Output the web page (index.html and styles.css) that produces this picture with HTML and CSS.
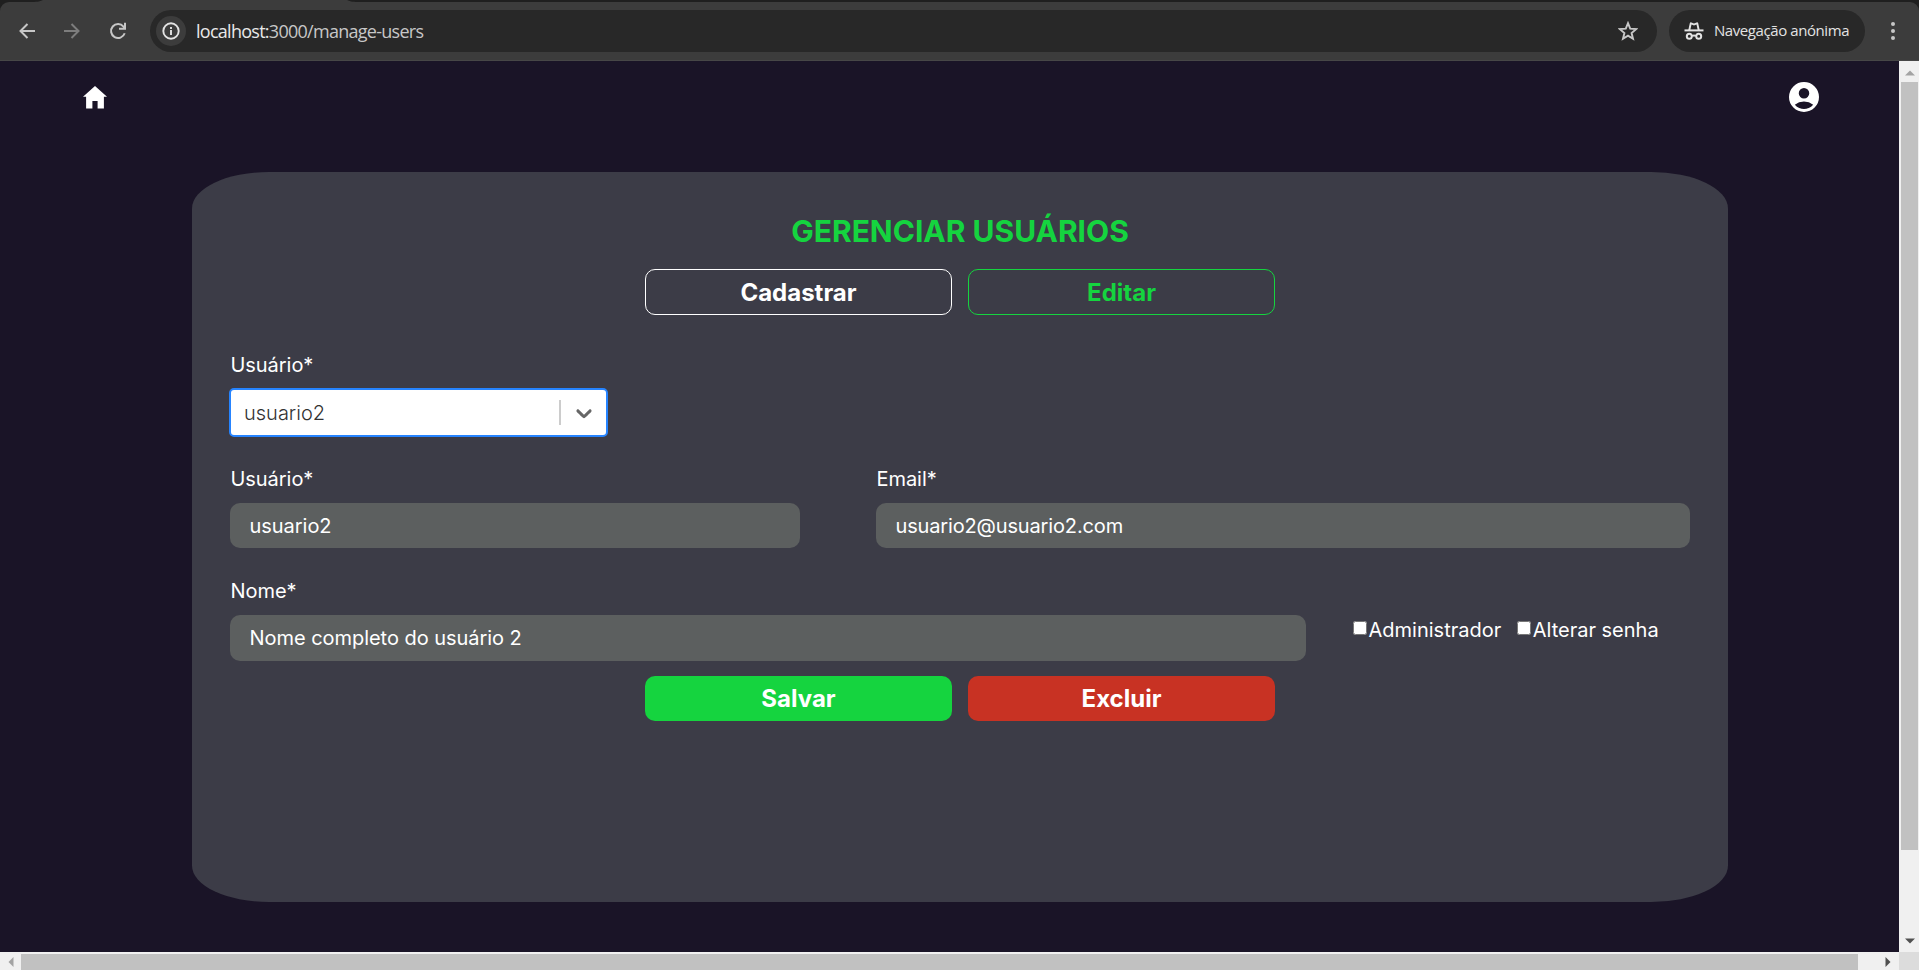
FILE: index.html
```html
<!DOCTYPE html>
<html lang="pt">
<head>
<meta charset="utf-8">
<title>Gerenciar usuários</title>
<link rel="stylesheet" href="styles.css">
</head>
<body>
<div class="window">
  <div class="toolbar">
    <svg class="tab-edge" width="372" height="2" viewBox="0 0 372 2"><path d="M32 2C38 2 41 1 43 0H347C349 1 352 2 358 2z"/></svg>
    <div class="toolbar-body">
      <svg class="nav-icon back" width="18" height="18" viewBox="0 0 18 18"><path d="M17 9H3M9.500 2 2.500 9l7 7"/></svg>
      <svg class="nav-icon forward" width="18" height="18" viewBox="0 0 18 18"><path d="M1 9h14M8.500 2l7 7-7 7"/></svg>
      <svg class="nav-icon reload" width="18" height="18" viewBox="0 0 18 18"><path d="M15.700 11.300A7 7 0 1 1 14.500 4.600L16 6.300M16 .8v6h-6"/></svg>
      <div class="omnibox">
        <span class="site-info"><svg width="20" height="20" viewBox="0 0 20 20"><circle cx="10" cy="10" r="7.700"/><path d="M10 9v5M10 5.900v2"/></svg></span>
        <span class="url"><b>localhost:</b>3000/manage-users</span>
        <svg class="star" width="20" height="20" viewBox="0 0 20 20"><path d="M10 2.200l2.200 5.500 5.900.4-4.500 3.900 1.400 5.700L10 14.600l-5 3.100 1.400-5.700L1.900 8.100l5.900-.4z"/></svg>
      </div>
      <div class="incognito">
        <svg width="20" height="20" viewBox="0 0 20 20"><path class="fill" d="M.5 8.400h19v2H.5z"/><path class="fill" d="M4.300 9 5.800 2.200Q6.200 1 7.400 1.400L10 2.400l2.600-1Q13.800 1 14.200 2.200L15.700 9h-2L12.500 3.600 10 4.600 7.500 3.600 6.300 9z"/><path d="M8 15q2-1.200 4 0"/><circle cx="5.300" cy="15.300" r="2.500"/><circle cx="14.700" cy="15.300" r="2.500"/></svg>
        <span class="incognito-text">Navegação anónima</span>
      </div>
      <svg class="menu" width="4" height="20" viewBox="0 0 4 20"><circle cx="2" cy="3" r="2"/><circle cx="2" cy="10" r="2"/><circle cx="2" cy="17" r="2"/></svg>
    </div>
  </div>

  <main class="page">
    <header class="topbar">
      <svg class="home" width="24" height="23" viewBox="0 0 24 23"><path d="M12 0 24 10.800H20.900V22.600H14.600V15H9.400V22.600H3.100V10.800H0z"/></svg>
      <svg class="account" width="36" height="36" viewBox="0 0 24 24"><path d="M12 2a10 10 0 1 0 0 20 10 10 0 0 0 0-20zm0 4a3.500 3.500 0 1 1 0 7 3.500 3.500 0 0 1 0-7zm0 14c-2.030 0-4.430-.82-6.140-2.880a9.950 9.950 0 0 1 12.280 0C16.430 19.180 14.030 20 12 20z"/></svg>
    </header>
    <form class="card">
      <h1 class="title">GERENCIAR USUÁRIOS</h1>
      <div class="actions">
        <button type="button" class="btn btn-outline">Cadastrar</button>
        <button type="button" class="btn btn-outline active">Editar</button>
      </div>
      <div class="field picker">
        <label class="label">Usuário*</label>
        <div class="select">
          <span class="select-value">usuario2</span>
          <span class="separator"></span>
          <svg class="chevron" width="26" height="26" viewBox="0 0 20 20"><path d="M4.516 7.548c0.436-0.446 1.043-0.481 1.576 0l3.908 3.747 3.908-3.747c0.533-0.481 1.141-0.446 1.574 0 0.436 0.445 0.408 1.197 0 1.615-0.406 0.418-4.695 4.502-4.695 4.502-0.217 0.223-0.502 0.335-0.787 0.335s-0.570-0.112-0.789-0.335c0 0-4.287-4.084-4.695-4.502s-0.436-1.170 0-1.615z"/></svg>
        </div>
      </div>
      <div class="row row-user">
        <div class="field user"><label class="label">Usuário*</label><input class="input" type="text" value="usuario2"></div>
        <div class="field email"><label class="label">Email*</label><input class="input" type="text" value="usuario2@usuario2.com"></div>
      </div>
      <div class="row row-name">
        <div class="field name"><label class="label">Nome*</label><input class="input tall" type="text" value="Nome completo do usuário 2"></div>
        <div class="checks">
          <label class="check"><input type="checkbox">Administrador</label>
          <label class="check"><input type="checkbox">Alterar senha</label>
        </div>
      </div>
      <div class="actions bottom">
        <button type="button" class="btn btn-save">Salvar</button>
        <button type="button" class="btn btn-delete">Excluir</button>
      </div>
    </form>
  </main>

  <div class="vscroll">
    <svg width="10" height="6" viewBox="0 0 10 6"><path class="dim" d="M0 5.500 5 .5l5 5z"/></svg>
    <span class="vthumb"></span>
    <svg class="down" width="10" height="6" viewBox="0 0 10 6"><path d="M0 .5h10l-5 5z"/></svg>
  </div>
  <div class="hscroll">
    <svg width="6" height="10" viewBox="0 0 6 10"><path class="dim" d="M5.500 0v10l-5-5z"/></svg>
    <span class="hthumb"></span>
    <svg class="right" width="6" height="10" viewBox="0 0 6 10"><path d="M.5 0v10l5-5z"/></svg>
  </div>
  <div class="corner"></div>
</div>
</body>
</html>
```
FILE: styles.css
```css
* { box-sizing: border-box; }
body { margin: 0; overflow: hidden; font-family: Inter, sans-serif; }
svg { display: block; flex: none; }

.window {
  display: grid;
  grid-template: 61px 891px 18px / 1899px 20px;
  width: 1919px;
  height: 970px;
}

/* Browser toolbar */
.toolbar { grid-column: 1 / 3; background: #1f1f1f; font-family: "Open Sans", sans-serif; }
.tab-edge { fill: #3c3c3c; }
.toolbar-body {
  display: flex;
  align-items: center;
  height: 59px;
  padding: 0 24px 0 18px;
  background: #3c3c3c;
  border-bottom: 1px solid #474747;
  border-radius: 9px 9px 0 0;
}
.nav-icon { fill: none; stroke: #c7c7c7; stroke-width: 2; }
.forward { margin-left: 27px; stroke: #7d7d7d; }
.reload { margin-left: 28px; }
.omnibox {
  display: flex;
  align-items: center;
  width: 1507px;
  height: 42px;
  margin-left: 23px;
  padding: 0 19px 0 6px;
  border-radius: 21px;
  background: #282828;
}
.site-info { display: grid; place-items: center; width: 30px; height: 30px; border-radius: 50%; background: #3c3c3c; }
.site-info svg { fill: none; stroke: #e3e3e3; stroke-width: 1.900; }
.url { margin-left: 10px; font-size: 18px; letter-spacing: -.73px; color: #c7c7c7; white-space: nowrap; }
.url b { font-weight: 400; color: #e8e8e8; }
.star { margin-left: auto; fill: none; stroke: #c7c7c7; stroke-width: 1.900; }
.incognito { display: flex; align-items: center; width: 196px; height: 42px; margin-left: 12px; padding-left: 15px; border-radius: 21px; background: #282828; }
.incognito svg { fill: none; stroke: #e3e3e3; stroke-width: 2; }
.incognito .fill { fill: #e3e3e3; stroke: none; }
.incognito-text { margin-left: 10px; padding-bottom: 2px; font-size: 15px; letter-spacing: -.42px; color: #e3e3e3; white-space: nowrap; }
.menu { margin-left: auto; fill: #c7c7c7; }

/* Page */
.page { background: #1a1427; overflow: hidden; }
.topbar { display: flex; justify-content: space-between; align-items: center; height: 71px; padding: 0 77px 0 83px; }
.topbar svg { fill: #fff; }
.home { margin-top: 2px; }
.card {
  width: 1536px;
  height: 730px;
  margin: 40px 0 0 192px;
  padding: 40px 38px 0;
  border-radius: 5%;
  background: #3c3c47;
  color: #fff;
}
.title { margin: 0; font-size: 30px; line-height: 38px; font-weight: 700; text-align: center; color: #15d43f; }
.actions { display: flex; justify-content: center; gap: 16px; margin-top: 19px; }
.btn { width: 307px; height: 46px; padding: 0; border: 0; border-radius: 10px; font: 700 24px/30px Inter, sans-serif; color: #fff; }
.btn-outline { padding-top: 1px; border: 1px solid #fff; background: transparent; }
.active { border-color: #15d43f; color: #15d43f; }
.bottom { margin-top: 15px; }
.bottom .btn { height: 45px; }
.btn-save { background: #15d43f; }
.btn-delete { background: #c83223; }
.label { display: block; padding-left: .5px; font-size: 20px; line-height: 24px; letter-spacing: -.05px; }
.field { display: flex; flex-direction: column; gap: 12px; }
.picker { margin-top: 38px; gap: 11px; }
.select { display: flex; align-items: center; width: 379px; height: 49px; margin-left: -1px; padding: 0 9px 0 13px; border: 2px solid #2684ff; border-radius: 5px; background: #fff; }
.select-value { flex: 1; font-size: 20px; font-weight: 300; color: #333; }
.separator { width: 2px; height: 25px; margin-right: 10px; background: #ccc; }
.chevron { fill: #666; }
.row { display: flex; }
.row-user { gap: 76px; margin-top: 30px; }
.user { width: 570px; }
.email { width: 814px; }
.input { height: 45px; padding: 0 19.500px; border: 0; border-radius: 10px; background: #5c5f5f; color: #fff; font: 20px Inter, sans-serif; letter-spacing: -.04px; }
.email .input { letter-spacing: -.15px; }
.tall { height: 46px; }
.row-name { margin-top: 31px; }
.name { width: 1076px; }
.checks { display: flex; gap: 15.500px; margin: 39px 0 0 46.500px; height: 24px; }
.check { display: flex; align-items: flex-start; font-size: 20px; line-height: 24px; white-space: nowrap; }
.check input { width: 14px; height: 14px; margin: 3px 2px 0 0; }

/* Scrollbars */
.vscroll { display: flex; flex-direction: column; align-items: center; padding: 9px 0 8px 1px; background: #f0f0f0; }
.vthumb { width: 17px; height: 768px; margin-top: 6px; background: #c1c1c1; }
.vscroll svg, .hscroll svg { fill: #505050; }
.vscroll .dim, .hscroll .dim { fill: #a3a3a3; }
.down { margin-top: auto; }
.hscroll { display: flex; align-items: center; padding: 2px 8px 0 8px; background: #f0f0f0; }
.hthumb { width: 1837px; height: 16px; margin-left: 7px; background: #c1c1c1; }
.right { margin-left: auto; }
.corner { background: #dcdcdc; }
```
